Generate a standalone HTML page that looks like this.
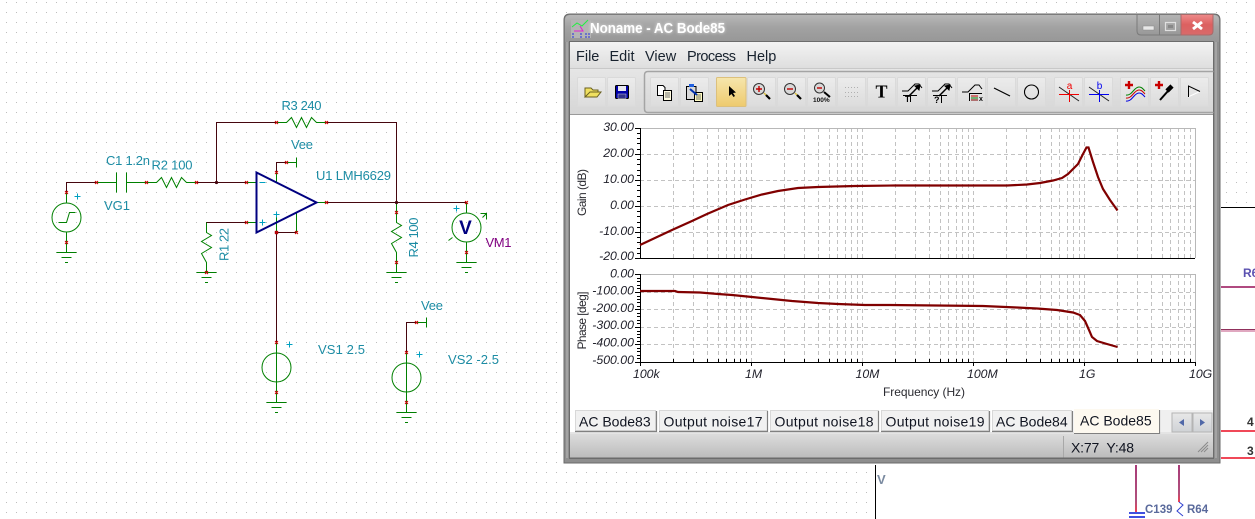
<!DOCTYPE html>
<html><head><meta charset="utf-8"><style>
html,body{margin:0;padding:0;background:#fff;width:1255px;height:519px;overflow:hidden}
svg{display:block}
text{font-family:"Liberation Sans",sans-serif;white-space:pre}
.t{font-size:13px;fill:#1c8ca4}
.a{font-size:12.3px;font-style:italic;fill:#22222c;text-anchor:end}
.x{font-size:12.3px;font-style:italic;fill:#22222c}
.l{font-size:12px;fill:#2a2a30}
.m{font-size:14.5px;fill:#18222e}
.tb{font-size:14px;fill:#101420}
.w{fill:none;stroke:#45060e;stroke-width:1}
.g{fill:none;stroke:#008000;stroke-width:1}
.p{fill:none;stroke:#00a0c0;stroke-width:1}
</style></head><body>
<svg width="1255" height="519" viewBox="0 0 1255 519" xmlns="http://www.w3.org/2000/svg">
<defs>
<pattern id="dots" x="0" y="0" width="10" height="10" patternUnits="userSpaceOnUse"><rect x="6" y="2" width="1" height="1" fill="#bdbdbd"/></pattern>
<linearGradient id="tbar" x1="0" y1="0" x2="0" y2="1"><stop offset="0" stop-color="#b8b8b8"/><stop offset=".45" stop-color="#a2a2a2"/><stop offset="1" stop-color="#979797"/></linearGradient>
<linearGradient id="menu" x1="0" y1="0" x2="0" y2="1"><stop offset="0" stop-color="#f3f3f3"/><stop offset="1" stop-color="#dedede"/></linearGradient>
<linearGradient id="tool" x1="0" y1="0" x2="0" y2="1"><stop offset="0" stop-color="#e6e6e6"/><stop offset="1" stop-color="#d6d6d6"/></linearGradient>
<linearGradient id="btn" x1="0" y1="0" x2="0" y2="1"><stop offset="0" stop-color="#ececec"/><stop offset="1" stop-color="#dcdcdc"/></linearGradient>
<linearGradient id="act" x1="0" y1="0" x2="0" y2="1"><stop offset="0" stop-color="#f6e6ac"/><stop offset="1" stop-color="#eeca6e"/></linearGradient>
<linearGradient id="stat" x1="0" y1="0" x2="0" y2="1"><stop offset="0" stop-color="#dcdcdc"/><stop offset="1" stop-color="#bcbcbc"/></linearGradient>
<linearGradient id="close" x1="0" y1="0" x2="0" y2="1"><stop offset="0" stop-color="#ee8a8a"/><stop offset=".5" stop-color="#dc6060"/><stop offset="1" stop-color="#d86a6a"/></linearGradient>
<linearGradient id="cap" x1="0" y1="0" x2="0" y2="1"><stop offset="0" stop-color="#b4b4b4"/><stop offset="1" stop-color="#989898"/></linearGradient>
<linearGradient id="scr" x1="0" y1="0" x2="0" y2="1"><stop offset="0" stop-color="#e8e8e8"/><stop offset="1" stop-color="#cfd2d6"/></linearGradient>
<linearGradient id="vm" x1="0" y1="0" x2="0" y2="1"><stop offset="0" stop-color="#a83a78"/><stop offset=".75" stop-color="#b0507c"/><stop offset="1" stop-color="#f04050"/></linearGradient>
<path id="m" d="M-1.500-1.500L1.500 1.500M1.500-1.500L-1.500 1.500" stroke="#c80000" stroke-width="1" fill="none"/>
<g id="gnd" class="g"><path d="M-10 0H10M-5 5H5M-1.500 10H1.500"/></g>
<g id="dec" stroke="#c2c2c2" stroke-width="1" stroke-dasharray="4 3" fill="none">
<path d="M33.500 0V130M53.500 0V130M67.500 0V130M78.500 0V130M86.500 0V130M94.500 0V130M100.500 0V130M106.500 0V130"/>
</g>
<g id="dec2" stroke="#c2c2c2" stroke-width="1" stroke-dasharray="4 3" fill="none">
<path d="M33.500 0V88M53.500 0V88M67.500 0V88M78.500 0V88M86.500 0V88M94.500 0V88M100.500 0V88M106.500 0V88"/>
</g>
<g id="tk" stroke="#000" stroke-width="1" fill="none"><path d="M33.500 0V-3M53.500 0V-3M67.500 0V-3M78.500 0V-3M86.500 0V-3M94.500 0V-3M100.500 0V-3M106.500 0V-3"/></g>
<path id="btnshape" d="M1.500 .5H27.500Q28.500 .5 28.500 1.500V28.500Q28.500 29.500 27.500 29.500H1.500Q.5 29.500 .5 28.500V1.500Q.5 .5 1.500 .5Z" fill="url(#btn)" stroke="#dadada"/>
</defs>

<rect width="1255" height="519" fill="#fff"/>
<rect x="0" y="0" width="875" height="519" fill="url(#dots)"/>
<rect x="875" y="0" width="380" height="207" fill="url(#dots)"/>

<!-- right background fragments -->
<rect x="875" y="465" width="1" height="54" fill="#000"/>
<text x="877" y="484" style="font-size:13px;font-weight:bold;fill:#7a8aa0">V</text>
<rect x="1221" y="207" width="34" height="1" fill="#000"/>
<rect x="1221" y="286" width="34" height="2" fill="#b04a80"/>
<rect x="1221" y="329" width="34" height="1" fill="#90305c"/>
<rect x="1221" y="330" width="34" height="2" fill="#e0a8c0"/>
<rect x="1221" y="430" width="34" height="2" fill="#f04858"/>
<rect x="1221" y="457" width="34" height="2" fill="#f04858"/>
<text x="1243" y="277" style="font-size:12px;font-weight:bold;fill:#5a50b0">R6</text>
<text x="1247" y="426" style="font-size:12px;font-weight:bold;fill:#333">4</text>
<text x="1247" y="455" style="font-size:12px;font-weight:bold;fill:#333">3</text>
<rect x="1135" y="465" width="2" height="48" fill="url(#vm)"/>
<rect x="1178" y="465" width="2" height="37" fill="url(#vm)"/>
<path d="M1179 502L1183 505L1177 511L1183 516" fill="none" stroke="#3040d0"/>
<rect x="1129" y="512" width="16" height="2" fill="#4050e0"/>
<rect x="1129" y="516" width="16" height="2" fill="#4050e0"/>
<text x="1145" y="513" style="font-size:11.500px;font-weight:bold;fill:#5a6a9c">C139</text>
<text x="1187" y="513" style="font-size:11.500px;font-weight:bold;fill:#5a6a9c">R64</text>

<!-- schematic -->
<g transform="translate(.5 .5)">
<path class="w" d="M66 192V182H96M196 182H246M216 182V122H276M326 122H396V202M326 202H466M206 232V222H246M276 172V162H286M276 232H296M276 232V342M406 352V322H416"/>
<path class="g" d="M66 192V202M66 232V252M96 182H116M126 182H146M146 182H156L161 177L166 187L171 177L176 187L181 177L186 182H196M116 172V192M126 172V192"/>
<path class="g" d="M246 182H256M246 222H256M276 122H286L291 117L296 127L301 117L306 127L311 117L316 122H326M276 172V182M286 162H296M296 157V167M276 212V232M296 212V232M316 202H326"/>
<path class="g" d="M206 222V232L211 235L201 241L211 247L201 253L206 262V272M396 202V222L401 225L391 231L401 237L391 243L396 252V272M466 202V212M466 242V262"/>
<path class="g" d="M276 342V402M406 352V412M416 322H426M426 317V327"/>
<path class="g" d="M448 240L452 237M482 217L486 213M480 213H486V219"/>
<circle class="g" cx="66" cy="217" r="14.500"/>
<path class="g" d="M58 222H66L69 212H75"/>
<circle class="g" cx="466" cy="227" r="14.500"/>
<circle class="g" cx="276" cy="367" r="14.500"/>
<circle class="g" cx="406" cy="377" r="14.500"/>
<use href="#gnd" x="66" y="252"/><use href="#gnd" x="206" y="272"/><use href="#gnd" x="396" y="272"/><use href="#gnd" x="466" y="262"/><use href="#gnd" x="276" y="402"/><use href="#gnd" x="406" y="412"/>
<path d="M256 172L316 202L256 232Z" fill="none" stroke="#000080" stroke-width="2"/>
<circle cx="216" cy="182" r="1.600" fill="#45060e"/><circle cx="396" cy="202" r="1.600" fill="#45060e"/><circle cx="276" cy="232" r="1.800" fill="#8a1020"/>
<use href="#m" x="66" y="192"/><use href="#m" x="66" y="242"/><use href="#m" x="96" y="182"/><use href="#m" x="146" y="182"/><use href="#m" x="196" y="182"/><use href="#m" x="246" y="182"/><use href="#m" x="246" y="222"/><use href="#m" x="206" y="272"/><use href="#m" x="276" y="122"/><use href="#m" x="326" y="122"/><use href="#m" x="276" y="172"/><use href="#m" x="286" y="162"/><use href="#m" x="326" y="202"/><use href="#m" x="296" y="232"/><use href="#m" x="396" y="212"/><use href="#m" x="396" y="262"/><use href="#m" x="466" y="202"/><use href="#m" x="466" y="252"/><use href="#m" x="276" y="342"/><use href="#m" x="276" y="392"/><use href="#m" x="406" y="352"/><use href="#m" x="406" y="402"/><use href="#m" x="416" y="322"/><use href="#m" x="276" y="232"/>
<path class="p" d="M74 196H80M77 193V199M259 182H265M259 222H265M262 219V225M273 214H279M276 211V217M453 208H459M456 205V211M286 344H292M289 341V347M416 354H422M419 351V357"/>
</g>
<text x="465.500" y="234" text-anchor="middle" style="font-size:19px;font-weight:bold;fill:#000080">V</text>
<text class="t" x="106" y="165" textLength="44">C1 1.2n</text>
<text class="t" x="151.500" y="169.500" textLength="41">R2 100</text>
<text class="t" x="104" y="210" textLength="26">VG1</text>
<text class="t" transform="translate(228.700 261) rotate(-90)" textLength="33">R1 22</text>
<text class="t" x="281.500" y="110" textLength="40">R3 240</text>
<text class="t" x="291" y="149" textLength="22">Vee</text>
<text class="t" x="316" y="180" textLength="75">U1 LMH6629</text>
<text class="t" transform="translate(418 257.500) rotate(-90)" textLength="40">R4 100</text>
<text x="485.500" y="247" style="font-size:13px;fill:#800080" textLength="26">VM1</text>
<text class="t" x="318" y="354" textLength="47">VS1 2.5</text>
<text class="t" x="448" y="364" textLength="51">VS2 -2.5</text>
<text class="t" x="421" y="310" textLength="22">Vee</text>

<!-- window frame -->
<path d="M570 14H1214Q1220 14 1220 20V463H564V20Q564 14 570 14Z" fill="#8e8e8e" stroke="#6a6a6a" stroke-width="1"/>
<path d="M570 15H1214Q1219 15 1219 20V42H565V20Q565 15 570 15Z" fill="url(#tbar)"/>
<rect x="566" y="42" width="2" height="416" fill="#a4a4a4"/>
<rect x="1215" y="42" width="2" height="416" fill="#a4a4a4"/>
<rect x="569.500" y="41.500" width="644" height="417" fill="#fff" stroke="#6c6c6c"/>

<!-- caption buttons -->
<path d="M1137 14.500H1181V35H1141Q1137 35 1137 31Z" fill="url(#cap)" stroke="#7a7a7a"/>
<path d="M1181 14.500H1213V31Q1213 35 1209 35H1181Z" fill="url(#close)" stroke="#a86a6a"/>
<rect x="1159" y="15" width="1" height="20" fill="#7a7a7a"/>
<rect x="1143" y="26" width="11" height="4" fill="#e8e8e8" stroke="#888" stroke-width=".5"/>
<rect x="1165.500" y="22.500" width="10" height="8" fill="none" stroke="#e0e0e0" stroke-width="1.200"/><rect x="1168" y="25" width="5" height="3" fill="#888"/>
<path d="M1193 22L1202 29M1202 22L1193 29" stroke="#fff" stroke-width="3" fill="none"/>

<!-- title -->
<rect x="571" y="20" width="20" height="18" fill="#b4b4b4"/>
<path d="M572 27L577 23L582 26L588 20" fill="none" stroke="#20f040" stroke-width="1"/>
<path d="M574 31H583L580 26" fill="none" stroke="#e020d0"/>
<path d="M573 33V38M581 33V38M586 33V38M589 33V38" stroke="#2030e0" stroke-dasharray="2 1"/>
<text x="590" y="33" textLength="135" lengthAdjust="spacingAndGlyphs" style="font-size:14.500px;font-weight:bold;fill:#fff;filter:drop-shadow(0 0 1.500px rgba(255,255,255,.7))">Noname - AC Bode85</text>

<!-- menu -->
<rect x="570" y="42" width="643" height="26" fill="url(#menu)"/>
<text class="m" x="576" y="61">File</text>
<text class="m" x="609.500" y="61">Edit</text>
<text class="m" x="645" y="61">View</text>
<text class="m" x="687" y="61" textLength="49">Process</text>
<text class="m" x="746.500" y="61">Help</text>

<!-- toolbar -->
<rect x="570" y="68" width="643" height="47" fill="url(#tool)"/>
<rect x="570" y="68" width="643" height="1" fill="#c8c8c8"/>
<path d="M1213.500 71.500H648Q644.500 71.500 644.500 75V109Q644.500 112.500 648 112.500H1213.500" fill="none" stroke="#a4a4a4" stroke-width="1.500"/>
<rect x="570" y="114" width="643" height="1" fill="#9a9a9a"/>
<use href="#btnshape" x="577" y="77"/><use href="#btnshape" x="607" y="77"/>
<use href="#btnshape" x="650" y="77"/><use href="#btnshape" x="680" y="77"/>
<path d="M717.500 77.500H745Q746 77.500 746 78.500V105.500Q746 106.500 745 106.500H717.500Q716.500 106.500 716.500 105.500V78.500Q716.500 77.500 717.500 77.500Z" fill="url(#act)" stroke="#dcc07c"/>
<use href="#btnshape" x="747" y="77"/><use href="#btnshape" x="777" y="77"/><use href="#btnshape" x="807" y="77"/><use href="#btnshape" x="837" y="77"/><use href="#btnshape" x="867" y="77"/><use href="#btnshape" x="897" y="77"/><use href="#btnshape" x="927" y="77"/><use href="#btnshape" x="957" y="77"/><use href="#btnshape" x="987" y="77"/><use href="#btnshape" x="1017" y="77"/><use href="#btnshape" x="1054" y="77"/><use href="#btnshape" x="1084" y="77"/><use href="#btnshape" x="1120" y="77"/><use href="#btnshape" x="1150" y="77"/><use href="#btnshape" x="1180" y="77"/>

<!-- open -->
<path d="M585 97V88H591L593 90H598V92H590L585 97H597L601 92H590" fill="#f0e060" stroke="#6a6020" stroke-width="1"/>
<!-- save -->
<rect x="615.500" y="85.500" width="13" height="13" rx="1" fill="#0000a8" stroke="#000"/><rect x="618" y="86" width="8" height="5" fill="#e8e8f0"/><rect x="618" y="94" width="8" height="4.500" fill="#30308c" stroke="#d0d0e0" stroke-width=".5"/>
<!-- copy -->
<path d="M657.500 85.500H663L665 87.500V95.500H657.500Z" fill="#fff" stroke="#000"/>
<rect x="663.500" y="90.500" width="8" height="10" fill="#fffbe0" stroke="#000"/><path d="M665 93H670M665 95H670M665 97H670" stroke="#444" stroke-width=".8"/>
<!-- paste like -->
<path d="M686.500 86.500H696V99.500H686.500Z" fill="#d8d8d8" stroke="#000"/><rect x="689" y="84" width="5" height="3" fill="#2060e0"/>
<rect x="694.500" y="92.500" width="8" height="9" fill="#fffbc0" stroke="#000"/><path d="M696 95H701M696 97H701M696 99H701" stroke="#444" stroke-width=".8"/>
<path d="M690 89L697 95" stroke="#0030b0" stroke-width="2"/>
<!-- cursor -->
<path d="M729 86V96L731.500 94L733.500 97L735 96L733 93L736 92.500Z" fill="#000"/>
<!-- zoom in -->
<g id="zi"><circle cx="759" cy="89" r="5.500" fill="#d8d8d8" stroke="#333" stroke-width="1"/><path d="M764 93L770 99" stroke="#d8c040" stroke-width="1.500"/><path d="M766 95L770 99" stroke="#000" stroke-width="2.200"/></g>
<path d="M756 89H762M759 86V92" stroke="#c00000" stroke-width="1.400"/>
<use href="#zi" x="31"/><path d="M787 89H793" stroke="#c00000" stroke-width="1.400"/>
<circle cx="819.500" cy="88" r="5" fill="#d8d8d8" stroke="#333"/><path d="M817 88H822" stroke="#c00000" stroke-width="1.400"/><path d="M824 92L830 97" stroke="#000" stroke-width="2"/>
<text x="813" y="102" style="font-size:6.500px;font-weight:bold;fill:#111">100%</text>
<!-- grid -->
<path d="M845 87.500H859M845 92.500H859M845 96.500H859" stroke="#b0b0b0" stroke-dasharray="1 2"/>
<!-- T -->
<text x="881.500" y="97.500" text-anchor="middle" style="font-family:'Liberation Serif',serif;font-size:18px;font-weight:bold;fill:#000">T</text>
<!-- curve tools -->
<g fill="none" stroke="#000">
<path d="M902 91L908 91L915 84L919 84L922 88"/><path d="M909 96L918 87" stroke-width="1.500"/><path d="M915 86L920 85L919 90Z" fill="#000"/><path d="M903 95.500H917M910.500 96V102"/>
<path d="M932 91L938 91L945 84L949 84L952 88"/><path d="M939 96L948 87" stroke-width="1.500"/><path d="M945 86L950 85L949 90Z" fill="#000"/><path d="M933 95.500H947M941.500 96V103"/>
<path d="M962 92L968 92L975 85L979 85L982 89"/><path d="M969.500 94V101M969 93.500H982"/>
<path d="M994 88L1010 96" stroke-width="1.200"/>
</g>
<text x="905" y="102" style="font-size:8px;font-weight:bold;fill:#000">T</text>
<text x="934" y="103" style="font-size:9px;font-weight:bold;fill:#000">?</text>
<path d="M971 96H978" stroke="#c00000"/><path d="M971 98H978" stroke="#008000"/><path d="M971 100H978" stroke="#800000"/>
<text x="979" y="101" style="font-size:7px;font-weight:bold;fill:#000">x</text>
<circle cx="1031.500" cy="92" r="7" fill="none" stroke="#000" stroke-width="1.100"/>
<!-- a b cursors -->
<path d="M1059 87L1079 101" stroke="#222" fill="none"/><path d="M1059 94.500H1079M1069.500 90V102" stroke="#f00000" fill="none"/>
<text x="1069.500" y="89" text-anchor="middle" style="font-size:10px;fill:#f00000">a</text>
<path d="M1089 87L1109 101" stroke="#222" fill="none"/><path d="M1089 94.500H1109M1099.500 90V102" stroke="#0000f0" fill="none"/>
<text x="1099.500" y="89" text-anchor="middle" style="font-size:10px;fill:#0000f0">b</text>
<!-- curves -->
<path d="M1125 85H1133M1129 81V89" stroke="#c80000" stroke-width="2.400"/>
<path d="M1126 95C1132 96 1134 87 1139 87C1142 87 1143 89 1145 91" fill="none" stroke="#008000"/>
<path d="M1126 98C1132 99 1134 90 1139 90C1142 90 1143 92 1145 94" fill="none" stroke="#c80000"/>
<path d="M1126 101C1132 102 1134 93 1139 93C1142 93 1143 95 1145 97" fill="none" stroke="#0000e0"/>
<!-- pipette -->
<path d="M1155 85H1163M1159 81V89" stroke="#c80000" stroke-width="2.400"/>
<path d="M1160 100L1168 91" stroke="#000" stroke-width="2"/><path d="M1167 91L1172 86" stroke="#000" stroke-width="4.500"/>
<!-- triangle -->
<path d="M1188 97L1200 91.500" stroke="#fff" fill="none"/>
<path d="M1188.500 97V86L1200 91.500" fill="none" stroke="#000"/>

<!-- plot grid -->
<g>
<use href="#dec" x="640" y="128"/><use href="#dec" x="751" y="128"/><use href="#dec" x="862" y="128"/><use href="#dec" x="973" y="128"/><use href="#dec" x="1084" y="128"/>
<use href="#dec2" x="640" y="274"/><use href="#dec2" x="751" y="274"/><use href="#dec2" x="862" y="274"/><use href="#dec2" x="973" y="274"/><use href="#dec2" x="1084" y="274"/>
<path d="M751.500 128V258M862.500 128V258M973.500 128V258M1084.500 128V258M751.500 274V362M862.500 274V362M973.500 274V362M1084.500 274V362" stroke="#c2c2c2" stroke-dasharray="4 3" fill="none"/>
<path d="M640 154.500H1195M640 180.500H1195M640 206.500H1195M640 232.500H1195M640 292.500H1195M640 309.500H1195M640 327.500H1195M640 344.500H1195" stroke="#c2c2c2" stroke-dasharray="4 3" fill="none"/>
<path d="M640 128.500H1195.500V258M640 274.500H1195.500V362" stroke="#b8b8b8" fill="none"/>
<path d="M640 258.500H1195M640 362.500H1195" stroke="#000" fill="none"/>
<path d="M640.500 128V259M640.500 274V363" stroke="#000" fill="none"/>
<path d="M635 128.500H640M635 154.500H640M635 180.500H640M635 206.500H640M635 232.500H640M635 258.500H640M635 274.500H640M635 292.500H640M635 309.500H640M635 327.500H640M635 344.500H640M635 362.500H640" stroke="#000"/>
<path d="M637 133.500H640M637 138.500H640M637 143.500H640M637 149.500H640M637 159.500H640M637 164.500H640M637 170.500H640M637 175.500H640M637 185.500H640M637 190.500H640M637 196.500H640M637 201.500H640M637 211.500H640M637 216.500H640M637 222.500H640M637 227.500H640M637 237.500H640M637 242.500H640M637 248.500H640M637 253.500H640M637 278.500H640M637 281.500H640M637 285.500H640M637 288.500H640M637 296.500H640M637 299.500H640M637 302.500H640M637 306.500H640M637 313.500H640M637 316.500H640M637 320.500H640M637 323.500H640M637 331.500H640M637 334.500H640M637 337.500H640M637 341.500H640M637 348.500H640M637 351.500H640M637 355.500H640M637 358.500H640" stroke="#000"/>
<use href="#tk" x="640" y="362"/><use href="#tk" x="751" y="362"/><use href="#tk" x="862" y="362"/><use href="#tk" x="973" y="362"/><use href="#tk" x="1084" y="362"/>
<path d="M640.500 362V366M751.500 362V366M862.500 362V366M973.500 362V366M1084.500 362V366M1195.500 362V366" stroke="#000"/>
</g>
<polyline fill="none" stroke="#800000" stroke-width="2.200" points="640,245 672,230 692,221 707,214 728,205 745,199.500 762,194.500 778,191 798,188 818,187 855,186 895,185.500 1007,185.500 1027,184.500 1040,183 1053,180.500 1062,178 1068,174 1078,164 1083,154 1086.500,147.500 1088.500,147.500 1093,162 1098,177 1103,189 1110,200 1117.500,210.500"/>
<polyline fill="none" stroke="#800000" stroke-width="2.200" points="640,291 675,291 678,292 700,292.500 718,294 732,295 752,297 772,299 792,301 818,303 838,304 865,305 890,305 983,306 1017,307.500 1037,308.500 1057,310 1073,312.500 1080,315 1085,321 1089,330 1092,337 1097,341 1107,344 1117.500,347"/>

<text class="a" x="634" y="131">30.00</text>
<text class="a" x="634" y="157">20.00</text>
<text class="a" x="634" y="183">10.00</text>
<text class="a" x="634" y="209">0.00</text>
<text class="a" x="634" y="235">-10.00</text>
<text class="a" x="634" y="260">-20.00</text>
<text class="a" x="634" y="277.500">0.00</text>
<text class="a" x="634" y="294.500">-100.00</text>
<text class="a" x="634" y="312">-200.00</text>
<text class="a" x="634" y="329">-300.00</text>
<text class="a" x="634" y="346.500">-400.00</text>
<text class="a" x="634" y="364">-500.00</text>
<text class="x" x="633" y="378">100k</text>
<text class="x" x="745" y="378">1M</text>
<text class="x" x="855.500" y="378">10M</text>
<text class="x" x="967" y="378">100M</text>
<text class="x" x="1079" y="378">1G</text>
<text class="x" x="1189" y="378">10G</text>
<text class="l" x="883" y="396" textLength="82">Frequency (Hz)</text>
<text class="l" transform="translate(586 216) rotate(-90)" textLength="47">Gain (dB)</text>
<text class="l" transform="translate(586 349.500) rotate(-90)" textLength="58">Phase [deg]</text>

<!-- tabs -->
<rect x="570" y="432" width="643" height="2" fill="#e4e4e4"/>
<rect x="1159" y="410" width="54" height="22" fill="#f0f0f0"/>
<g fill="#f1f1f1" stroke="#d8d8d8">
<rect x="575.500" y="410.500" width="80" height="20"/><rect x="659.500" y="410.500" width="108" height="20"/><rect x="770.500" y="410.500" width="108" height="20"/><rect x="881.500" y="410.500" width="107" height="20"/><rect x="992.500" y="410.500" width="79" height="20"/>
</g>
<path d="M656.500 411V431.500H575M767.500 411V431.500H659M878.500 411V431.500H770M989.500 411V431.500H881M1072.500 411V431.500H992M1159.500 410V433.500H1074" fill="none" stroke="#808080" stroke-width="1.200"/>
<rect x="1074" y="409" width="85" height="24" fill="#fdf9f0"/>
<text class="tb" x="579" y="426.500">AC Bode83</text>
<text class="tb" x="663.500" y="426.500" textLength="99">Output noise17</text>
<text class="tb" x="774.500" y="426.500" textLength="99">Output noise18</text>
<text class="tb" x="885.500" y="426.500" textLength="99">Output noise19</text>
<text class="tb" x="996" y="426.500">AC Bode84</text>
<text class="tb" x="1080" y="425.500">AC Bode85</text>
<rect x="1172" y="413" width="20" height="19" fill="url(#scr)" stroke="#b4b4b4"/>
<rect x="1193" y="413" width="19" height="19" fill="url(#scr)" stroke="#b4b4b4"/>
<path d="M1179 422.500L1184 419V426Z" fill="#5068a8"/><path d="M1205 422.500L1200 419V426Z" fill="#5068a8"/>

<!-- status -->
<rect x="570" y="434" width="643" height="24" fill="url(#stat)"/>
<rect x="1063" y="436" width="1" height="22" fill="#a8a8a8"/>
<text class="tb" x="1071" y="452.500" textLength="63">X:77  Y:48</text>
<path d="M1198 452L1208 442M1201 452L1208 445M1204 452L1208 448" stroke="#8a8a8a" fill="none"/>
<rect x="569.500" y="457.500" width="644" height="1" fill="#6c6c6c"/>
</svg>
</body></html>
